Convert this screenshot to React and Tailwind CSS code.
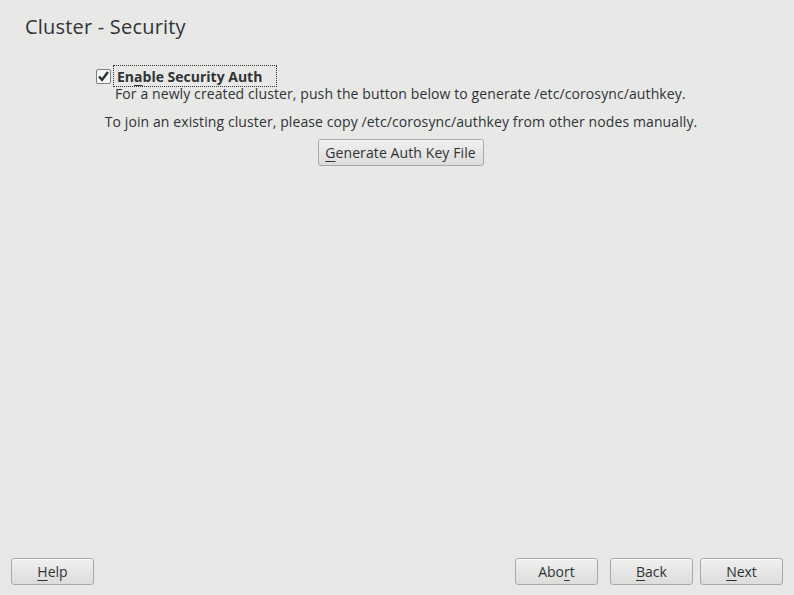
import React, { useState } from 'react';

const Btn = ({ children, className = '' }) => (
  <button
    className={`h-[27px] rounded-[3px] border border-[#a9a9a7] bg-gradient-to-b from-[#f0f0ef] to-[#dcdcda] text-[14px] text-[#2e3436] shadow-[inset_0_1px_0_#fafafa] ${className}`}
  >
    {children}
  </button>
);

const U = ({ children }) => <span className="underline underline-offset-[3px]">{children}</span>;

export default function App() {
  const [enabled, setEnabled] = useState(true);

  return (
    <div
      className="flex h-[595px] w-[794px] flex-col bg-[#e8e8e7] text-[#2e3436]"
      style={{ fontFamily: '"Open Sans", "Noto Sans", sans-serif' }}
    >
      <h1 className="pl-[25px] pt-[13px] text-[20px] leading-[28px] tracking-[0.2px] text-[#2e3436]">Cluster - Security</h1>

      <div className="flex flex-1 flex-col pt-[24px] tracking-[0.1px]">
        <div className="flex items-center pl-[96px]">
          <button
            onClick={() => setEnabled(!enabled)}
            className="flex h-[15px] w-[15px] items-center justify-center rounded-[2px] border border-[#7d8081] bg-[#f7f7f7]"
          >
            {enabled && (
              <svg viewBox="0 0 14 14" className="h-[13px] w-[13px]">
                <path d="M2.2 7 L5.5 10.6 L11.8 2.2" fill="none" stroke="#2e3436" strokeWidth="2.6" />
              </svg>
            )}
          </button>
          <div className="ml-[2px] flex h-[22px] w-[164px] items-center border border-dotted border-[#2e3436] pl-[3px] text-[14px] font-bold tracking-normal">
            En<U>a</U>ble Security Auth
          </div>
        </div>
        <p className="mt-[-3px] pl-[115px] text-[14px] leading-[20px]">
          For a newly created cluster, push the button below to generate /etc/corosync/authkey.
        </p>
        <p className="mt-[8px] pl-[8px] text-center text-[14px] leading-[20px]">
          To join an existing cluster, please copy /etc/corosync/authkey from other nodes manually.
        </p>
        <div className="mt-[7px] flex justify-center pl-[7px]">
          <Btn className="w-[166px]">
            <U>G</U>enerate Auth Key File
          </Btn>
        </div>
      </div>

      <div className="flex items-center px-[11px] pb-[10px]">
        <Btn className="w-[83px]">
          <U>H</U>elp
        </Btn>
        <div className="flex-1" />
        <Btn className="w-[83px]">
          Abo<U>r</U>t
        </Btn>
        <Btn className="ml-[12px] w-[83px]">
          <U>B</U>ack
        </Btn>
        <Btn className="ml-[7px] w-[83px]">
          <U>N</U>ext
        </Btn>
      </div>
    </div>
  );
}
